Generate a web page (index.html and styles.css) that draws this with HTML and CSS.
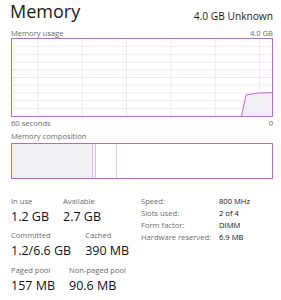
FILE: index.html
```html
<!DOCTYPE html>
<html lang="en">
<head>
    <meta charset="UTF-8">
    <meta name="viewport" content="width=device-width, initial-scale=1.0">
    <title>Memory</title>
    <link rel="stylesheet" href="styles.css">
</head>
<body>

    <!-- 헤더 -->
    <div class="header">
        <div class="title">Memory</div>
        <div class="subtitle">4.0 GB Unknown</div>
    </div>

    <!-- 사용량 그래프 -->
    <div class="caption">
        <span>Memory usage</span>
        <span>4.0 GB</span>
    </div>
    <div class="graph">
        <svg width="260" height="77" viewBox="0 0 260 77">
            <g class="grid">
                <line x1="0" y1="7.7" x2="260" y2="7.7"/>
                <line x1="0" y1="15.4" x2="260" y2="15.4"/>
                <line x1="0" y1="23.1" x2="260" y2="23.1"/>
                <line x1="0" y1="30.8" x2="260" y2="30.8"/>
                <line x1="0" y1="38.5" x2="260" y2="38.5"/>
                <line x1="0" y1="46.2" x2="260" y2="46.2"/>
                <line x1="0" y1="53.9" x2="260" y2="53.9"/>
                <line x1="0" y1="61.6" x2="260" y2="61.6"/>
                <line x1="0" y1="69.3" x2="260" y2="69.3"/>
                <line x1="26" y1="0" x2="26" y2="77"/>
                <line x1="70.3" y1="0" x2="70.3" y2="77"/>
                <line x1="114.6" y1="0" x2="114.6" y2="77"/>
                <line x1="159" y1="0" x2="159" y2="77"/>
                <line x1="203.3" y1="0" x2="203.3" y2="77"/>
                <line x1="247.6" y1="0" x2="247.6" y2="77"/>
            </g>
            <polygon class="area" points="229.5,77 234,56 247,54 260,53.6 260,77"/>
            <polyline class="line" points="229.5,77 234,56 247,54 260,53.6"/>
        </svg>
    </div>
    <div class="caption caption-under">
        <span>60 seconds</span>
        <span>0</span>
    </div>

    <!-- 메모리 구성 -->
    <div class="caption caption-comp">
        <span>Memory composition</span>
    </div>
    <div class="composition">
        <div class="seg seg-inuse"></div>
        <div class="seg seg-modified"></div>
        <div class="seg seg-standby"></div>
        <div class="seg seg-free"></div>
    </div>

    <!-- 상세 정보 -->
    <div class="stats">
        <div class="stats-left">
            <div class="stat-row">
                <div class="stat">
                    <div class="stat-label">In use</div>
                    <div class="stat-value">1.2 GB</div>
                </div>
                <div class="stat">
                    <div class="stat-label">Available</div>
                    <div class="stat-value">2.7 GB</div>
                </div>
            </div>
            <div class="stat-row">
                <div class="stat">
                    <div class="stat-label">Committed</div>
                    <div class="stat-value">1.2/6.6 GB</div>
                </div>
                <div class="stat">
                    <div class="stat-label">Cached</div>
                    <div class="stat-value">390 MB</div>
                </div>
            </div>
            <div class="stat-row">
                <div class="stat">
                    <div class="stat-label">Paged pool</div>
                    <div class="stat-value">157 MB</div>
                </div>
                <div class="stat">
                    <div class="stat-label">Non-paged pool</div>
                    <div class="stat-value">90.6 MB</div>
                </div>
            </div>
        </div>

        <div class="stats-right">
            <div class="key">Speed:</div><div class="val">800 MHz</div>
            <div class="key">Slots used:</div><div class="val">2 of 4</div>
            <div class="key">Form factor:</div><div class="val">DIMM</div>
            <div class="key">Hardware reserved:</div><div class="val">6.9 MB</div>
        </div>
    </div>

</body>
</html>
```

FILE: styles.css
```css
/* 전체 */
body {
    font-family: "Open Sans", "Noto Sans", sans-serif;
    background-color: #ffffff;
    color: #1a1a1a;
    margin: 0;
    padding: 0 8px 0 11px;
}

/* 헤더 */
.header {
    display: flex;
    justify-content: space-between;
    align-items: flex-start;
}

.title {
    font-size: 18px;
    line-height: 22px;
    margin-left: -1px;
}

.subtitle {
    font-size: 10.2px;
    line-height: 13px;
    margin-top: 9.5px;
}

/* 그래프 캡션 */
.caption {
    display: flex;
    justify-content: space-between;
    font-size: 7.6px;
    line-height: 10px;
    color: #6b6b6b;
    margin-top: 5px;
}

.caption-under {
    margin-top: 1px;
}

.caption-comp {
    margin-top: 3px;
}

/* 사용량 그래프 */
.graph {
    border: 1px solid #b36bcf;
    height: 77px;
}

.graph svg {
    display: block;
}

.grid line {
    stroke: #f3e5f8;
    stroke-width: 1;
}

.area {
    fill: #f1eef4;
}

.line {
    fill: none;
    stroke: #b36bcf;
    stroke-width: 1;
}

/* 메모리 구성 */
.composition {
    margin-top: 2px;
    border: 1px solid #b36bcf;
    height: 34px;
    display: flex;
}

.seg {
    height: 100%;
}

.seg-inuse {
    width: 80px;
    background: #f1eef4;
    border-right: 1px solid #dcc3e6;
}

.seg-modified {
    width: 2px;
    background: #f5eef8;
    border-right: 1px solid #dcc3e6;
}

.seg-standby {
    width: 20px;
    border-right: 1px solid #dcc3e6;
}

.seg-free {
    flex: 1;
}

/* 상세 정보 */
.stats {
    display: flex;
    align-items: flex-start;
    margin-top: 17px;
}

.stats-left {
    width: 130px;
    display: flex;
    flex-direction: column;
    gap: 5.5px;
}

.stat-row {
    display: flex;
    gap: 14px;
}

.stat-label {
    font-size: 7.6px;
    line-height: 10px;
    color: #6b6b6b;
    margin-bottom: 2px;
}

.stat-value {
    font-size: 12.5px;
    line-height: 17px;
    color: #111;
}

.stats-right {
    display: grid;
    grid-template-columns: 78px auto;
    font-size: 7.6px;
    line-height: 12.2px;
    margin-top: -1px;
}

.key {
    color: #6b6b6b;
}

.val {
    color: #111;
}
```
